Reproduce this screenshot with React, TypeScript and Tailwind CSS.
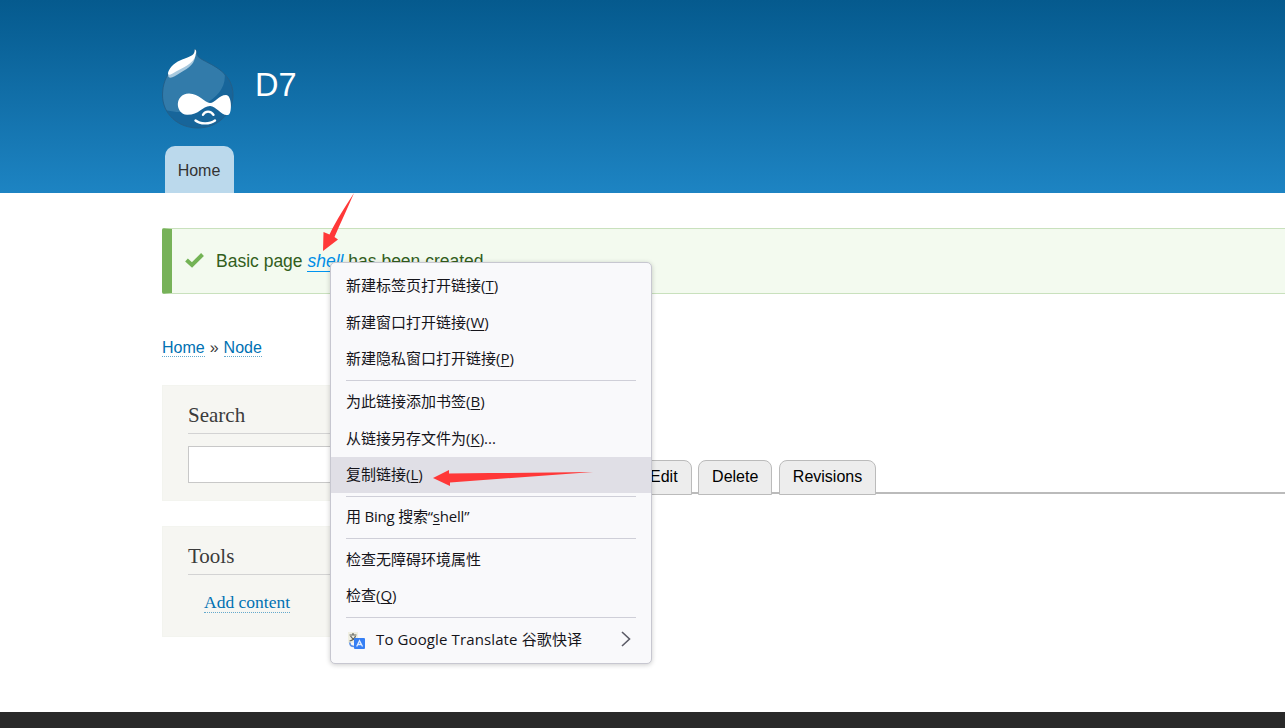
import type { ReactNode } from "react";

const sans = "font-['Liberation_Sans',Arial,sans-serif]";
const serif = "font-['Liberation_Serif',Georgia,serif]";
const dropShape = "M32.800 .3C36 1 34 5 36.500 8C41 12 51 15 60 22.500C67 29 71 36 71 46C71 65 55 79 36 79C16 79 .5 65 .5 46C.5 36 4 26 11 18.500C17 12 28 9 31.500 5C33 3 32.500 2 32.800 .3Z";

function Logo() {
  return (
    <svg className="h-[80px] w-[73px] shrink-0" viewBox="0 0 73 80">
      <defs>
        <clipPath id="drop">
          <path d={dropShape} />
        </clipPath>
      </defs>
      <g clipPath="url(#drop)">
        <rect width="73" height="80" fill="#327baa" />
        <path d="M62 21C66 37 55 48 45 54C33 63 20 66 0 60V80H73V20Z" fill="#17659a" />
      </g>
      <path d={dropShape} fill="none" stroke="#225e87" strokeWidth=".9" />
      <path d="M33 5C34 14 27 19 18 24C13 27 9 30 6.500 28C5 24 9 17 17 13C24 9 31 8 33 5Z" fill="#a8c9de" />
      <path d="M32.800 .3C35.500 2 33.500 5 33.500 7C31 15 20 19 14 22.500C10 25 7 27 6 25C6 20 12 14 18 11.500C24 8.500 29 8 31.500 5C33 3 32.500 2 32.800 .3Z" fill="#fff" />
      <path d="M27 44.500C37 44.500 43 54 48 54C53 54 57 46 64 46C70 46 70 63 67 65.500C61 69 54 56.500 48 57C40 57.500 37 66 25 65.800C13 65 12 45 27 44.500Z" fill="#fff" />
      <path d="M41 65.800C43 61.500 49 61.500 51.500 65.800M33.500 71.500C38 75.300 48 75.300 53 71.500" fill="none" stroke="#fff" strokeWidth="2.400" strokeLinecap="round" />
    </svg>
  );
}

function Key({ children }: { children: ReactNode }) {
  return <span className="underline decoration-1 underline-offset-[2px]">{children}</span>;
}

function Item({ children, active = false }: { children: ReactNode; active?: boolean }) {
  return (
    <div className={active ? "flex h-9 items-center bg-[#e0dfe6] px-[15px] pb-[2px]" : "flex h-[36.600px] items-center px-[15px] pb-[2px]"}>
      <span className="whitespace-pre">{children}</span>
    </div>
  );
}

function Divider() {
  return <div className="mx-[15px] my-[2.500px] h-px shrink-0 bg-[#cfcfd8]" />;
}

function TranslateIcon() {
  return (
    <svg className="mt-[3px] mr-[10px] ml-[2px] h-[18px] w-[18px]" viewBox="0 0 18 18">
      <rect width="10" height="11" fill="#f0efe3" />
      <path d="M1.500 3H8.500M5 1V3M2.500 4C4 7 6 8 8.500 9M7.500 4C6.500 7 4 8.500 1.500 9" fill="none" stroke="#656760" strokeWidth="1.200" />
      <path d="M2 10.500C1.500 13 3 14.500 6 14.500" fill="none" stroke="#5c91e6" strokeWidth="1.700" />
      <rect x="6" y="6" width="11" height="11" rx="1" fill="#367ff4" />
      <path d="M8.700 14.500L11.500 8.800L14.500 14.500M9.700 12.500h3.800" fill="none" stroke="#e1edff" strokeWidth="1.300" />
    </svg>
  );
}

function ContextMenu() {
  return (
    <div className="absolute top-[262px] left-[330px] h-[402px] w-[322px] rounded-[5px] border border-[#c7c7d0] bg-[#f9f9fb] pt-[5px] font-['Open_Sans','Noto_Sans','Noto_Sans_CJK_SC',sans-serif] text-[15px] leading-[20px] text-[#15141a] shadow-[0_1px_5px_rgba(0,0,0,0.2)]">
      <Item>新建标签页打开链接(<Key>T</Key>)</Item>
      <Item>新建窗口打开链接(<Key>W</Key>)</Item>
      <Item>新建隐私窗口打开链接(<Key>P</Key>)</Item>
      <Divider />
      <Item>为此链接添加书签(<Key>B</Key>)</Item>
      <Item>从链接另存文件为(<Key>K</Key>)...</Item>
      <Item active>复制链接(<Key>L</Key>)</Item>
      <div className="mx-[15px] mt-[3px] mb-[2px] h-px bg-[#cfcfd8]" />
      <Item><span className="tracking-[-0.200px]">用 Bing 搜索“<Key>s</Key>hell”</span></Item>
      <Divider />
      <Item>检查无障碍环境属性</Item>
      <Item>检查(<Key>Q</Key>)</Item>
      <Divider />
      <div className="flex h-[37px] items-center px-[15px]">
        <TranslateIcon />
        <span className="tracking-[0.120px]">To Google Translate 谷歌快译</span>
        <svg className="ml-auto h-4 w-5" viewBox="0 0 20 16" fill="none" stroke="#5b5b66" strokeWidth="1.600">
          <path d="M6 1L13.500 8L6 15" />
        </svg>
      </div>
    </div>
  );
}

function Tab({ children }: { children: string }) {
  return <div className="flex h-[35px] items-center rounded-t-lg border border-[#bbb] bg-[#ededed] px-[13px] pb-[2px] text-black">{children}</div>;
}

export default function App() {
  return (
    <div className={`relative flex h-[728px] w-full flex-col overflow-hidden bg-white text-[16px] text-[#3b3b3b] ${sans}`}>
      <header className="flex h-[193px] shrink-0 flex-col bg-linear-to-b from-[#055a8e] to-[#1d84c3] pl-[162px]">
        <div className="flex h-[146px] pt-[49px]">
          <Logo />
          <h1 className="mt-[18px] ml-[20px] text-[32.500px] leading-[36px] text-white">D7</h1>
        </div>
        <nav className="ml-[3px] flex h-[47px] w-[69px] items-center justify-center rounded-t-[10px] bg-[#bbd9ec] pt-[2px] pr-px text-[#333]">Home</nav>
      </header>
      <main className="flex grow flex-col pt-[35px] pl-[162px]">
        <div className="flex h-[66px] shrink-0 items-center rounded-l-[2px] border-y border-l-[10px] border-y-[#c9e1bd] border-l-[#77b259] bg-[#f3faef] text-[17.500px] text-[#325e1c]">
          <svg className="mb-[2px] ml-[13px] h-[16px] w-[20px]" viewBox="0 0 20 16"><path d="M1.500 8L7 13L17.500 2.500" fill="none" stroke="#73b355" strokeWidth="4" /></svg>
          <p className="ml-[11px] whitespace-pre">Basic page <a className="border-b border-[#0094f0] text-[#008ee6] italic">shell</a> has been created.</p>
        </div>
        <div className="mt-[44px] flex h-[19px] gap-[5px] text-[#0071b3]">
          <a className="border-b border-dotted border-[#64a9cc] pt-px leading-[18px]">Home</a>
          <span className="pt-px leading-[18px] text-[#3b3b3b]">»</span>
          <a className="border-b border-dotted border-[#64a9cc] pt-px leading-[18px]">Node</a>
        </div>
        <div className="mt-[28px] flex justify-between">
          <aside className={`flex w-[290px] flex-col gap-[25px] ${serif}`}>
            <section className="h-[116px] border border-[#f3f4ef] bg-[#f6f6f2] px-[25px] pt-[17px]">
              <h2 className="h-[31px] border-b border-[#d3d3d3] text-[21px] leading-[24px]">Search</h2>
              <div className="mt-[12px] h-[37px] border border-[#c8c8c8] bg-white" />
            </section>
            <section className="h-[111px] border border-[#f3f4ef] bg-[#f6f6f2] px-[25px] pt-[17px]">
              <h2 className="h-[31px] border-b border-[#d3d3d3] text-[21px] leading-[24px]">Tools</h2>
              <a className="mt-[18px] ml-[16px] inline-block h-[20px] border-b border-dotted border-[#64a9cc] text-[17.500px] leading-[19px] text-[#0071b3]">Add content</a>
            </section>
          </aside>
          <div className="mt-[75px] flex h-[34px] w-[733px] gap-[6.500px] border-b-2 border-[#bbb] pl-[15px]">
            <div className="w-[62.500px]" />
            <Tab>Edit</Tab>
            <Tab>Delete</Tab>
            <Tab>Revisions</Tab>
          </div>
        </div>
      </main>
      <footer className="h-4 shrink-0 bg-[#292929]" />
      <ContextMenu />
      <svg className="pointer-events-none absolute top-[190px] left-[320px] h-[300px] w-[280px]" viewBox="320 190 280 300">
        <path d="M354 193C348 207 341 222 334.500 237L338 239.500L323 251L323.500 232L329.500 234.500C337 219 345 207 354 193Z" fill="#ff3838" />
        <path d="M593 472L449 473.500V470L433 478L450 486V482.500Z" fill="#ff3838" />
      </svg>
    </div>
  );
}
